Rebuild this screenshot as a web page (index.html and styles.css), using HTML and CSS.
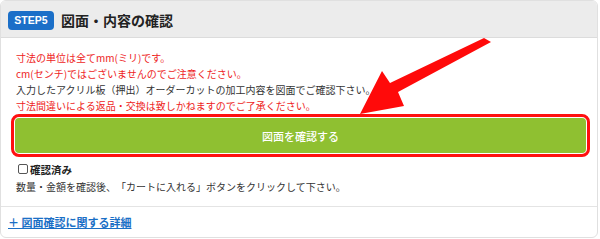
FILE: index.html
```html
<!DOCTYPE html>
<html lang="ja">
<head>
<meta charset="utf-8">
<link rel="stylesheet" href="styles.css">
</head>
<body>
<div class="card">
  <div class="card-head">
    <span class="badge">STEP5</span>
    <h2 class="title">図面・内容の確認</h2>
  </div>
  <div class="card-body">
    <p class="note red">寸法の単位は全てmm(ミリ)です。</p>
    <p class="note red">cm(センチ)ではございませんのでご注意ください。</p>
    <p class="note">入力したアクリル板（押出）オーダーカットの加工内容を図面でご確認下さい。</p>
    <p class="note red">寸法間違いによる返品・交換は致しかねますのでご了承ください。</p>
    <div class="btn-frame"><button class="btn">図面を確認する</button></div>
    <label class="check"><span class="box"></span>確認済み</label>
    <p class="note">数量・金額を確認後、「カートに入れる」ボタンをクリックして下さい。</p>
  </div>
  <div class="card-foot">
    <a class="more" href="#">＋ 図面確認に関する詳細</a>
  </div>
</div>
<svg class="arrow" width="600" height="239" viewBox="0 0 600 239">
  <polygon points="484,38 491,42 398,92 404,106 360,114 382,71 390,83" fill="#ff0a0a"/>
</svg>
</body>
</html>
```
FILE: styles.css
```css
html, body {
  margin: 0;
  padding: 0;
  background: #fff;
}
body {
  font-family: "Noto Sans CJK JP", "Noto Sans", sans-serif;
  color: #333;
  width: 600px;
  height: 239px;
  overflow: hidden;
  position: relative;
  text-spacing-trim: space-all;
}
.card {
  width: 596px;
  height: 236px;
  border: 1px solid #e0e0e0;
  border-radius: 6px;
  overflow: hidden;
  display: flex;
  flex-direction: column;
}
.card-head {
  background: #ececec;
  border-bottom: 1px solid #dcdcdc;
  display: flex;
  align-items: center;
  padding-left: 7px;
  box-sizing: border-box;
  height: 37px;
}
.badge {
  background: #1b6fc8;
  color: #fff;
  font-family: "Liberation Sans", Arial, sans-serif;
  font-weight: bold;
  font-size: 10.5px;
  width: 46px;
  height: 19px;
  border-radius: 4px;
  display: flex;
  align-items: center;
  justify-content: center;
  margin-top: 2px;
}
.title {
  margin: 0 0 0 7px;
  font-size: 14px;
  font-weight: bold;
  color: #222;
  line-height: 20px;
  margin-top: 1px;
}
.card-body {
  padding: 12px 14px 11px 15px;
  border-bottom: 1px solid #e4e4e4;
}
.note {
  margin: 0;
  font-size: 10px;
  line-height: 16px;
  color: #333;
  white-space: nowrap;
}
.note.red {
  color: #ee1c1c;
}
.btn-frame {
  margin: 0 -7px 0 -5px;
  border: 3px solid #ff1010;
  border-radius: 8px;
  padding: 1px;
  background: #fff;
}
.btn {
  display: block;
  width: 100%;
  height: 35px;
  border: none;
  border-radius: 4px;
  background: #8fc031;
  color: #fff;
  font-family: "Noto Sans CJK JP", sans-serif;
  font-size: 11px;
  font-weight: 500;
  padding: 0;
}
.check {
  display: flex;
  align-items: center;
  margin-top: 4px;
  height: 16px;
  font-size: 10.5px;
  font-weight: bold;
  color: #222;
  padding-left: 2px;
}
.box {
  width: 8px;
  height: 8px;
  border: 1px solid #555;
  border-radius: 2px;
  margin-right: 2px;
  background: #fff;
}
.check + .note {
  margin-top: 2px;
}
.card-foot {
  flex: 1;
  display: flex;
  align-items: center;
  padding-left: 7px;
}
.more {
  color: #1a6fc6;
  font-size: 11px;
  font-weight: bold;
  text-decoration: underline;
  line-height: 15px;
}
.arrow {
  position: absolute;
  left: 0;
  top: 0;
  pointer-events: none;
}
```
